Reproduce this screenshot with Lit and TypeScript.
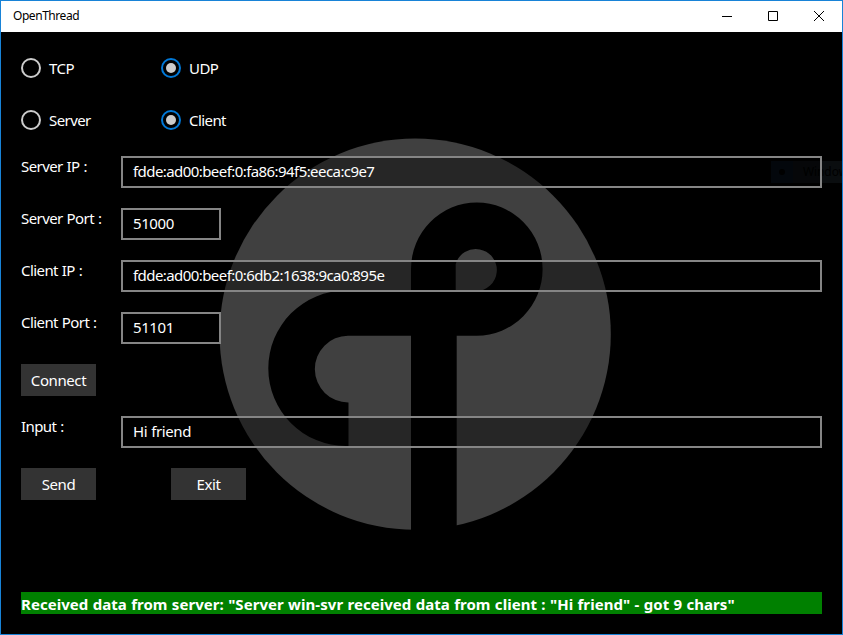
import { LitElement, html, css, svg } from "lit";
import { customElement, property } from "lit/decorators.js";
import { classMap } from "lit/directives/class-map.js";

@customElement("radio-option")
class RadioOption extends LitElement {
  @property() label = "";
  @property({ type: Boolean }) checked = false;

  static styles = css`
    :host { display: block; width: 140px; }
    .option { display: flex; align-items: center; height: 32px; gap: 8px; }
    .ring {
      box-sizing: border-box; width: 20px; height: 20px; border-radius: 50%;
      border: 2px solid #cccccc; display: flex; align-items: center; justify-content: center;
    }
    .ring.on { border-color: #0078d7; }
    .dot { width: 10px; height: 10px; border-radius: 50%; background: #cccccc; }
    .text { line-height: 20px; padding-bottom: 1px; white-space: nowrap; }
  `;

  render() {
    return html`<div class="option">
      <span class=${classMap({ ring: true, on: this.checked })}>
        ${this.checked ? html`<span class="dot"></span>` : null}
      </span>
      <span class="text">${this.label}</span>
    </div>`;
  }
}

@customElement("form-field")
class FormField extends LitElement {
  @property() label = "";
  @property() value = "";
  @property({ type: Boolean }) short = false;
  @property({ type: Boolean }) address = false;

  static styles = css`
    :host { display: grid; grid-template-columns: 100px 1fr; height: 32px; }
    .label { line-height: 20px; white-space: nowrap; }
    .box {
      box-sizing: border-box; height: 32px; border: 2px solid #858585;
      background: rgba(0, 0, 0, 0.4); padding-left: 10px; line-height: 26px; white-space: nowrap;
    }
    .box.short { width: 100px; }
    .value { letter-spacing: -0.4px; }
    .value.address { letter-spacing: -0.57px; }
  `;

  render() {
    return html`
      <div class="label">${this.label}</div>
      <div class=${classMap({ box: true, short: this.short })}>
        <span class=${classMap({ value: true, address: this.address })}>${this.value}</span>
      </div>
    `;
  }
}

@customElement("app-root")
class AppRoot extends LitElement {
  static styles = css`
    :host { display: block; width: 843px; height: 635px; }
    .window {
      position: relative; box-sizing: border-box; width: 843px; height: 635px;
      border: 1px solid #1883d7; background: #000; color: #fff; overflow: hidden;
      display: flex; flex-direction: column;
      font: 15px/20px "Noto Sans", "Open Sans", sans-serif; letter-spacing: -0.57px; word-spacing: 0.5px;
    }
    .titlebar {
      flex: none; height: 31px; background: #fff; color: #000;
      display: flex; justify-content: space-between; align-items: center;
    }
    .title { font-size: 12px; padding-left: 12px; letter-spacing: -0.45px; line-height: 20px; padding-bottom: 1px; }
    .controls { display: flex; height: 31px; }
    .control { width: 46px; height: 31px; display: block; }
    .logo { position: absolute; left: -1px; top: -1px; }
    .ghost {
      position: absolute; left: 770px; top: 160px; width: 72px; height: 22px;
      display: flex; align-items: center; background: #0a0d0f; color: #000;
      font-size: 12px; letter-spacing: -0.1px; white-space: nowrap; overflow: hidden;
    }
    .ghost-mark { flex: none; width: 22px; height: 22px; background: #050c15; display: flex; align-items: center; justify-content: center; }
    .ghost-dot { width: 6px; height: 6px; border-radius: 50%; background: #000; }
    .ghost-text { flex: none; padding-left: 10px; }
    .content {
      position: relative; flex: 1; padding: 20px; display: flex; flex-direction: column; gap: 20px;
    }
    .row { display: flex; height: 32px; }
    .buttons { gap: 75px; }
    .button {
      width: 75px; height: 32px; background: #333; text-align: center; line-height: 33px;
      letter-spacing: -0.4px;
    }
    .status {
      margin-top: auto; height: 22px; line-height: 25px; background: #008000;
      font-weight: 700; letter-spacing: 0.05px; word-spacing: 0.35px; white-space: nowrap; overflow: hidden;
    }
  `;

  render() {
    return html`<div class="window">
      <svg class="logo" width="843" height="635" viewBox="0 0 843 635">
        <circle cx="415.2" cy="334.2" r="195.6" fill="#404040"></circle>
        <path fill="#000" fill-rule="evenodd" d="M411 540V335.7H348A33.4 33.4 0 0 0 348.5 402.5V446H346A77.7 77.7 0 0 1 346 290.6H411V269A65.8 66.5 0 0 1 542.6 269A66 66.5 0 0 1 476.5 335.7H456.7V540ZM455.7 291H476A21 21 0 1 0 455.7 264Z"></path>
      </svg>
      <div class="ghost">
        <span class="ghost-mark"><span class="ghost-dot"></span></span>
        <span class="ghost-text">Window</span>
      </div>
      <div class="titlebar">
        <span class="title">OpenThread</span>
        <div class="controls">
          ${[
            svg`<path d="M18 15.5H28"></path>`,
            svg`<path d="M18.5 10.5H27.5V19.5H18.5Z"></path>`,
            svg`<path d="M18 10L28 20M28 10L18 20"></path>`,
          ].map((icon) => html`<svg class="control" viewBox="0 0 46 31" fill="none" stroke="#000" stroke-width="1">${icon}</svg>`)}
        </div>
      </div>
      <div class="content">
        <div class="row">
          <radio-option label="TCP"></radio-option>
          <radio-option label="UDP" checked></radio-option>
        </div>
        <div class="row">
          <radio-option label="Server"></radio-option>
          <radio-option label="Client" checked></radio-option>
        </div>
        <form-field label="Server IP :" value="fdde:ad00:beef:0:fa86:94f5:eeca:c9e7" address></form-field>
        <form-field label="Server Port :" value="51000" short></form-field>
        <form-field label="Client IP :" value="fdde:ad00:beef:0:6db2:1638:9ca0:895e" address></form-field>
        <form-field label="Client Port :" value="51101" short></form-field>
        <div class="row"><div class="button">Connect</div></div>
        <form-field label="Input :" value="Hi friend"></form-field>
        <div class="row buttons">
          <div class="button">Send</div>
          <div class="button">Exit</div>
        </div>
        <div class="status">Received data from server: "Server win-svr received data from client : "Hi friend" - got 9 chars"</div>
      </div>
    </div>`;
  }
}
